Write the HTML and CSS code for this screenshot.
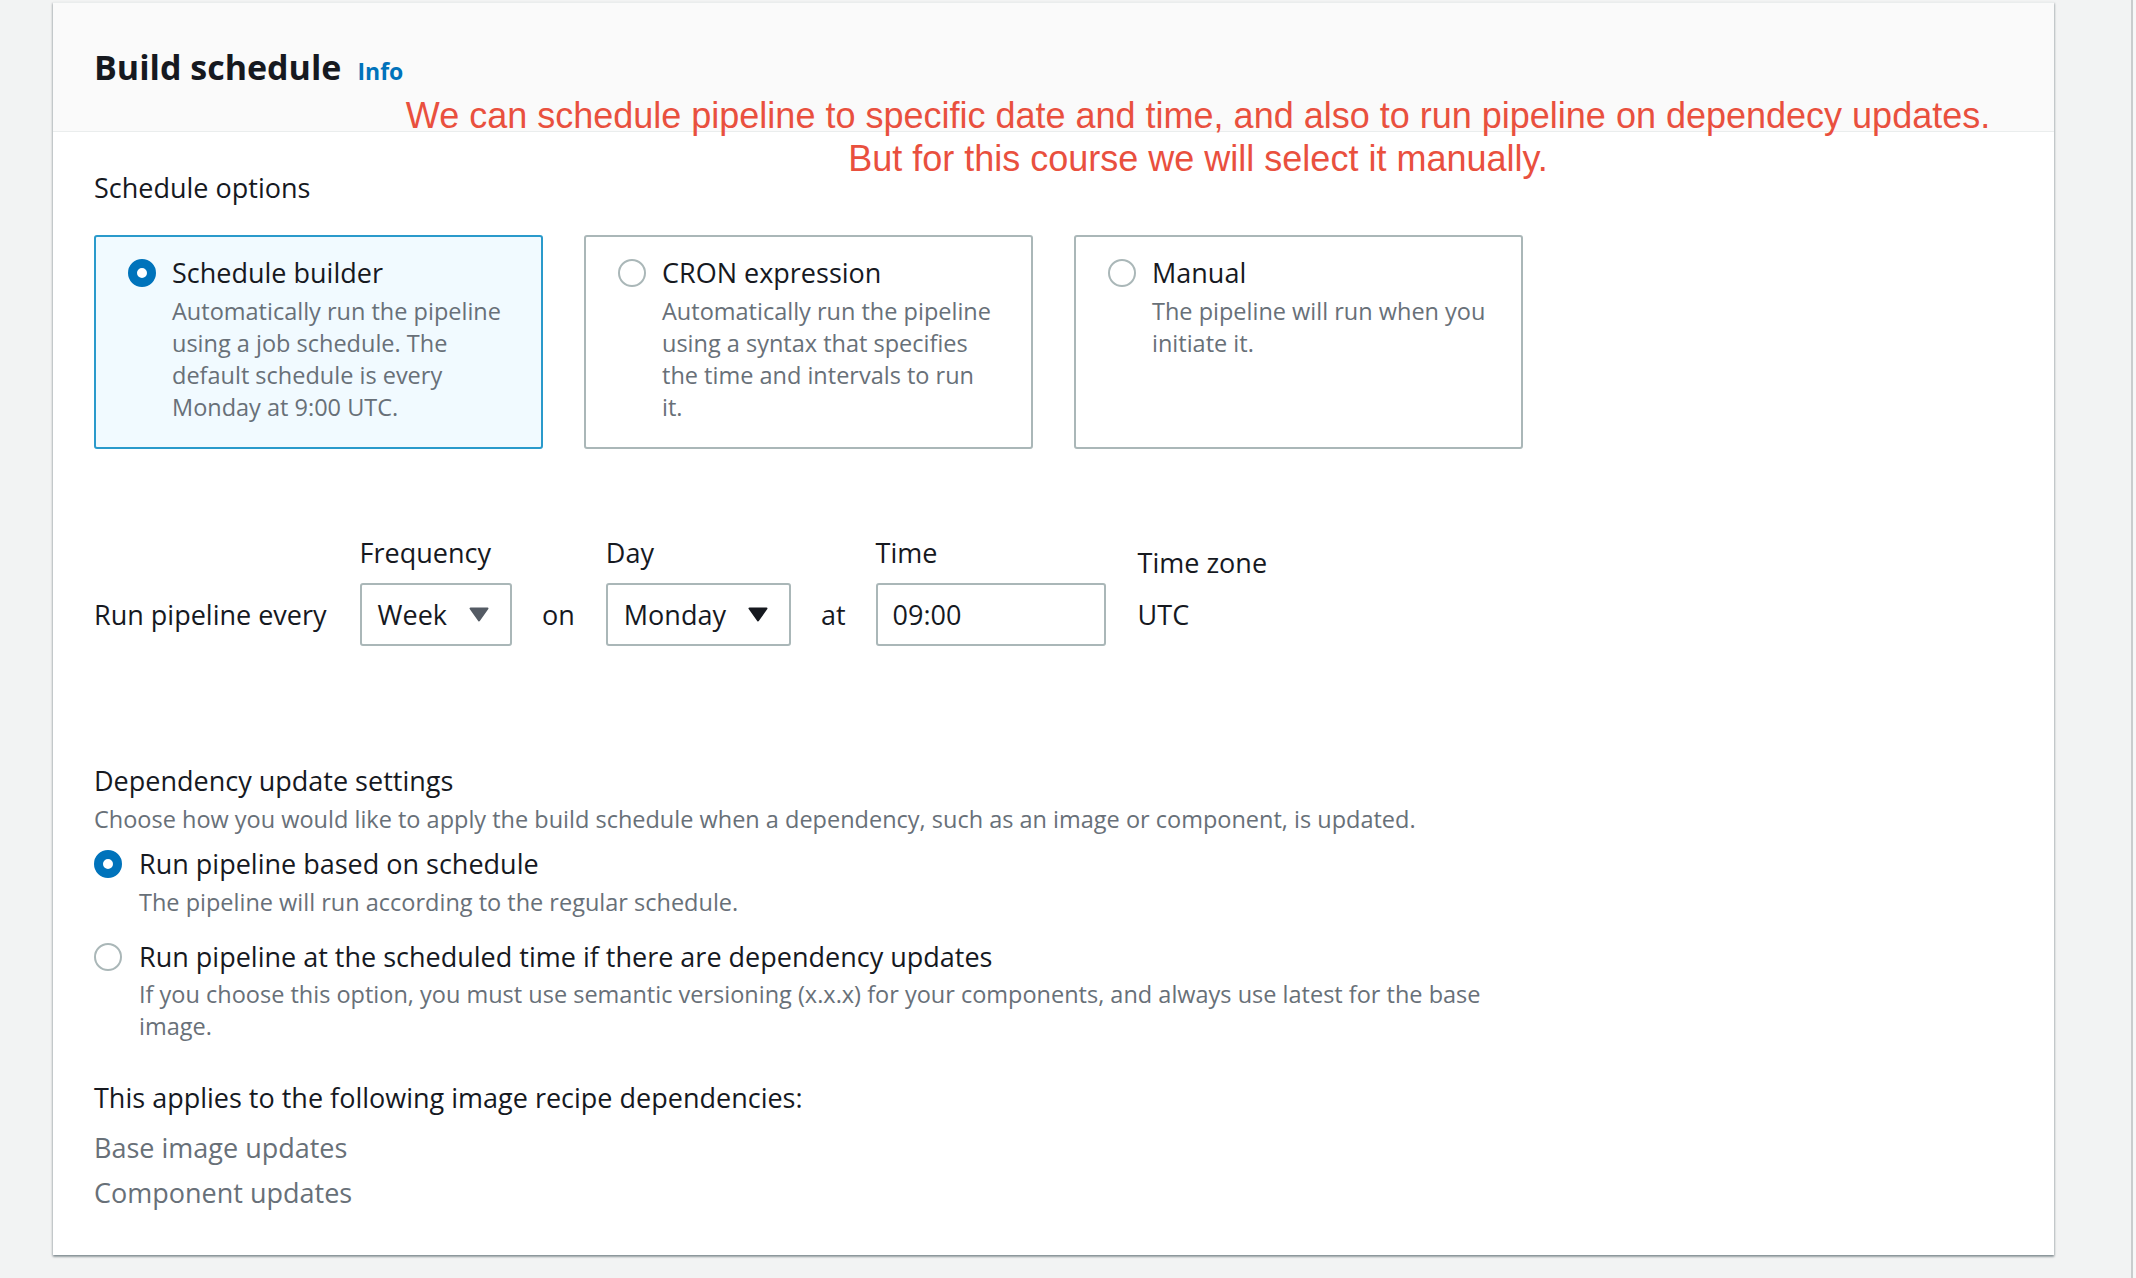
FILE: index.html
```html
<!DOCTYPE html>
<html lang="en">
<head>
<meta charset="utf-8">
<title>Build schedule</title>
<link rel="stylesheet" href="styles.css">
</head>
<body>
<div class="page">
  <section class="panel">
    <header class="panel-header">
      <h2 class="panel-title">Build schedule</h2>
      <a class="info-link">Info</a>
    </header>
    <div class="annotation">We can schedule pipeline to specific date and time, and also to run pipeline on dependecy updates.<br>But for this course we will select it manually.</div>
    <div class="panel-body">
      <div class="form">
        <div class="field-label">Schedule options</div>
        <div class="tiles">
          <div class="tile tile-selected">
            <span class="radio radio-checked"></span>
            <div class="tile-text">
              <div class="tile-label">Schedule builder</div>
              <div class="desc">Automatically run the pipeline using a job schedule. The default schedule is every Monday at 9:00 UTC.</div>
            </div>
          </div>
          <div class="tile">
            <span class="radio"></span>
            <div class="tile-text">
              <div class="tile-label">CRON expression</div>
              <div class="desc">Automatically run the pipeline using a syntax that specifies the time and intervals to run it.</div>
            </div>
          </div>
          <div class="tile">
            <span class="radio"></span>
            <div class="tile-text">
              <div class="tile-label">Manual</div>
              <div class="desc">The pipeline will run when you initiate it.</div>
            </div>
          </div>
        </div>

        <div class="run-row">
          <div class="row-text row-lead">Run pipeline every</div>
          <div class="field">
            <div class="field-top">Frequency</div>
            <div class="select select-muted">Week<svg class="caret" width="20" height="15" viewBox="0 0 20 15"><path d="M1.5 1.5H18.5L10 13.5Z"/></svg></div>
          </div>
          <div class="row-text">on</div>
          <div class="field field-day">
            <div class="field-top">Day</div>
            <div class="select">Monday<svg class="caret" width="20" height="15" viewBox="0 0 20 15"><path d="M1.5 1.5H18.5L10 13.5Z"/></svg></div>
          </div>
          <div class="row-text">at</div>
          <div class="field">
            <div class="field-top">Time</div>
            <div class="input">09:00</div>
          </div>
          <div class="field field-tz">
            <div class="field-top tz-label">Time zone</div>
            <div class="row-text">UTC</div>
          </div>
        </div>

        <div class="dep">
          <div class="field-label">Dependency update settings</div>
          <div class="desc dep-desc">Choose how you would like to apply the build schedule when a dependency, such as an image or component, is updated.</div>
          <div class="option option-first">
            <span class="radio radio-checked"></span>
            <div class="option-text">
              <div class="option-label">Run pipeline based on schedule</div>
              <div class="desc">The pipeline will run according to the regular schedule.</div>
            </div>
          </div>
          <div class="option option-second">
            <span class="radio"></span>
            <div class="option-text">
              <div class="option-label">Run pipeline at the scheduled time if there are dependency updates</div>
              <div class="desc desc-tight">If you choose this option, you must use semantic versioning (x.x.x) for your components, and always use latest for the base image.</div>
            </div>
          </div>
          <div class="applies">This applies to the following image recipe dependencies:</div>
          <ul class="dep-list">
            <li>Base image updates</li>
            <li>Component updates</li>
          </ul>
        </div>
      </div>
    </div>
  </section>
</div>
<div class="scroll-edge"></div>
</body>
</html>
```
FILE: styles.css
```css
html, body {
  margin: 0;
  padding: 0;
}
body {
  background: #f2f3f3;
  font-family: "Open Sans", "Noto Sans", sans-serif;
  color: #16191f;
  display: flex;
  min-height: 1278px;
}
.page {
  flex: 1;
  padding: 3px 0 0 53px;
}
.scroll-edge {
  width: 3px;
  border-left: 2px solid #c9cccd;
  background: #f7f7f7;
}
.panel {
  position: relative;
  width: 2001px;
  background: #ffffff;
  box-shadow: 0 2px 2px 0 rgba(0, 28, 36, 0.3), 1px 1px 2px 0 rgba(0, 28, 36, 0.15), -1px 1px 2px 0 rgba(0, 28, 36, 0.15);
  border-top: 1px solid #eaeded;
  margin-top: -1px;
}
.panel-header {
  display: flex;
  align-items: baseline;
  padding: 41px 41px 41px;
  background: #fafafa;
  border-bottom: 1px solid #eaeded;
}
.panel-title {
  margin: 0;
  font-size: 34px;
  font-weight: 700;
  line-height: 46px;
}
.info-link {
  margin-left: 16px;
  font-size: 23px;
  font-weight: 700;
  color: #0073bb;
}
.annotation {
  position: absolute;
  top: 91px;
  left: 295px;
  width: 1700px;
  text-align: center;
  font-family: "Liberation Sans", Arial, sans-serif;
  font-size: 36px;
  line-height: 43px;
  color: #e9503e;
}
.panel-body {
  padding: 38px 41px 40px;
}
.form {
  width: 1430px;
}
.field-label {
  font-size: 27px;
  line-height: 36px;
}
.desc {
  font-size: 23.5px;
  line-height: 32px;
  color: #687078;
  margin-top: 4px;
}
.tiles {
  display: flex;
  gap: 41px;
  margin-top: 29px;
}
.tile {
  box-sizing: border-box;
  width: 449px;
  display: flex;
  gap: 16px;
  padding: 18px 31px 24px 32px;
  border: 2px solid #aab7b8;
  border-radius: 3px;
  background: #ffffff;
}
.tile-selected {
  border-color: #2a9acb;
  background: #f1faff;
}
.tile-text {
  flex: 1;
  min-width: 0;
}
.tile-label {
  font-size: 27px;
  line-height: 36px;
}
.radio {
  box-sizing: border-box;
  flex: none;
  width: 28px;
  height: 28px;
  margin-top: 4px;
  border-radius: 50%;
  border: 2px solid #aab7b8;
  background: #ffffff;
}
.radio-checked {
  border: 9px solid #0073bb;
}
.run-row {
  display: flex;
  align-items: flex-end;
  gap: 30px;
  margin-top: 86px;
}
.row-text {
  height: 63px;
  display: flex;
  align-items: center;
  font-size: 27px;
  white-space: nowrap;
}
.row-lead {
  margin-right: 3px;
}
.field {
  display: flex;
  flex-direction: column;
}
.field-day {
  margin-left: 1px;
}
.field-tz {
  margin-left: 2px;
}
.field-top {
  font-size: 27px;
  line-height: 36px;
  margin-bottom: 12px;
}
.tz-label {
  margin-bottom: 2px;
}
.select {
  box-sizing: border-box;
  height: 63px;
  display: flex;
  align-items: center;
  gap: 22px;
  padding: 0 21px 0 16px;
  border: 2px solid #aab7b8;
  border-radius: 3px;
  font-size: 27px;
  background: #ffffff;
}
.caret {
  fill: #16191f;
  stroke: #16191f;
  stroke-width: 2;
  stroke-linejoin: round;
}
.select-muted .caret {
  fill: #545b64;
  stroke: #545b64;
}
.input {
  box-sizing: border-box;
  width: 230px;
  height: 63px;
  display: flex;
  align-items: center;
  padding: 0 15px;
  border: 2px solid #aab7b8;
  border-radius: 3px;
  font-size: 27px;
  background: #ffffff;
}
.dep {
  margin-top: 117px;
}
.option {
  display: flex;
  gap: 17px;
}
.option-first {
  margin-top: 11px;
}
.option-second {
  margin-top: 21px;
}
.option-text {
  flex: 1;
  min-width: 0;
}
.option-label {
  font-size: 27px;
  line-height: 36px;
}
.desc-tight {
  margin-top: 3px;
}
.applies {
  margin-top: 38px;
  font-size: 27px;
  line-height: 36px;
}
.dep-list {
  list-style: none;
  margin: 9px 0 0;
  padding: 0;
  font-size: 27px;
  line-height: 45px;
  color: #687078;
}
```
